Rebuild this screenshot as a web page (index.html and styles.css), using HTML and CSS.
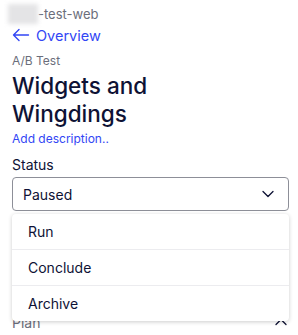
FILE: index.html
```html
<!DOCTYPE html>
<html lang="en">
<head>
  <meta charset="UTF-8" />
  <meta name="viewport" content="width=device-width, initial-scale=1.0"/>
  <title>Widgets and Wingdings</title>
  <link rel="stylesheet" href="styles.css">
</head>
<body>
  <div class="page">
    <div class="crumb">
      <span class="blur"></span><span class="project">-test-web</span>
    </div>
    <a class="back" href="#">
      <svg width="18" height="14" viewBox="0 0 18 14" fill="none" stroke="currentColor" stroke-width="1.4" stroke-linecap="round" stroke-linejoin="round">
        <path d="M16.5 7H1.5M7 1.5L1.5 7L7 12.5"/>
      </svg>
      Overview
    </a>

    <div class="kind">A/B Test</div>
    <h1>Widgets and Wingdings</h1>
    <a class="desc" href="#">Add description..</a>

    <div class="field">
      <label>Status</label>
      <div class="select">
        <span>Paused</span>
        <svg width="12" height="8" viewBox="0 0 12 8" fill="none" stroke="currentColor" stroke-width="1.3" stroke-linecap="round" stroke-linejoin="round">
          <path d="M1 1.5L6 6.5L11 1.5"/>
        </svg>
      </div>
      <ul class="menu">
        <li>Run</li>
        <li>Conclude</li>
        <li>Archive</li>
      </ul>
    </div>

    <div class="field plan">
      <label>Plan</label>
      <svg class="up" width="12" height="8" viewBox="0 0 12 8" fill="none" stroke="currentColor" stroke-width="1.3" stroke-linecap="round" stroke-linejoin="round">
        <path d="M1 6.5L6 1.5L11 6.5"/>
      </svg>
    </div>
  </div>
</body>
</html>
```

FILE: styles.css
```css
:root {
  --text: #0e1235;
  --muted: #6b6e7b;
  --blue: #3246f5;
  --border: #8d8f98;
  --line: #ececef;
}

body {
  margin: 0;
  font-family: Inter, "Noto Sans", sans-serif;
  color: var(--text);
  background: #fff;
}

.page {
  padding: 4px 9px 0 12px;
}

.crumb {
  display: flex;
  align-items: center;
  height: 20px;
  font-size: 13px;
  color: var(--muted);
}

.blur {
  width: 30px;
  height: 20px;
  margin-left: -4px;
  background: #e4e4e6;
  filter: blur(2px);
}

.back {
  display: flex;
  align-items: center;
  gap: 6px;
  margin-top: 2px;
  height: 18px;
  font-size: 14.5px;
  color: var(--blue);
  text-decoration: none;
}

.kind {
  margin-top: 9px;
  font-size: 12px;
  color: var(--muted);
}

h1 {
  margin: 4px 0 0 0;
  font-size: 22.5px;
  font-weight: 500;
  line-height: 28px;
  width: 180px;
}

.desc {
  display: block;
  font-size: 12px;
  color: var(--blue);
  text-decoration: none;
  margin-top: 3px;
}

.field {
  position: relative;
  margin-top: 10px;
}

.field label {
  display: block;
  font-size: 14px;
  margin-bottom: 4px;
}

.select {
  display: flex;
  align-items: center;
  justify-content: space-between;
  height: 32px;
  padding: 0 14px 0 10px;
  border: 1px solid var(--border);
  border-radius: 4px;
  font-size: 14px;
}

.menu {
  position: absolute;
  left: 0;
  right: 0;
  top: 58px;
  margin: 0;
  padding: 0;
  list-style: none;
  background: #fff;
  border-radius: 4px;
  box-shadow: 0 1px 4px rgba(0, 0, 0, 0.2);
  z-index: 2;
}

.menu li {
  height: 35px;
  line-height: 35px;
  padding-left: 16px;
  font-size: 14px;
  border-top: 1px solid var(--line);
}

.menu li:first-child {
  border-top: none;
}

.plan {
  display: flex;
  justify-content: space-between;
  margin-top: 103px;
  color: var(--muted);
}

.plan .up {
  color: var(--text);
  margin-top: 4px;
  margin-right: 2px;
}
```
